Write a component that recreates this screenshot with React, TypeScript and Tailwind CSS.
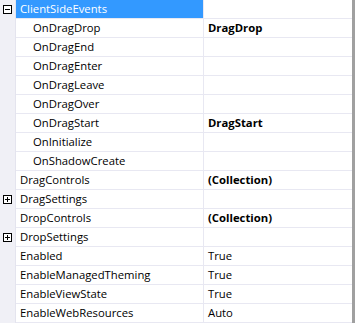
import React from 'react';

type Row = {
  name: string;
  value?: string;
  bold?: boolean;
  indent?: boolean;
  toggle?: '+' | '-';
  selected?: boolean;
};

const rows: Row[] = [
  { name: 'ClientSideEvents', toggle: '-', selected: true },
  { name: 'OnDragDrop', value: 'DragDrop', bold: true, indent: true },
  { name: 'OnDragEnd', indent: true },
  { name: 'OnDragEnter', indent: true },
  { name: 'OnDragLeave', indent: true },
  { name: 'OnDragOver', indent: true },
  { name: 'OnDragStart', value: 'DragStart', bold: true, indent: true },
  { name: 'OnInitialize', indent: true },
  { name: 'OnShadowCreate', indent: true },
  { name: 'DragControls', value: '(Collection)', bold: true },
  { name: 'DragSettings', toggle: '+' },
  { name: 'DropControls', value: '(Collection)', bold: true },
  { name: 'DropSettings', toggle: '+' },
  { name: 'Enabled', value: 'True' },
  { name: 'EnableManagedTheming', value: 'True' },
  { name: 'EnableViewState', value: 'True' },
  { name: 'EnableWebResources', value: 'Auto' },
];

function Toggle({ kind }: { kind: '+' | '-' }) {
  return (
    <svg width="9" height="9" viewBox="0 0 9 9" className="block">
      <rect x="0.5" y="0.5" width="8" height="8" fill="white" stroke="black" />
      <line x1="2" y1="4.5" x2="7" y2="4.5" stroke="black" />
      {kind === '+' && <line x1="4.5" y1="2" x2="4.5" y2="7" stroke="black" />}
    </svg>
  );
}

export default function App() {
  return (
    <div
      className="flex w-[355px] h-[323px] bg-white overflow-hidden text-[11.3px] text-black"
      style={{ fontFamily: '"Open Sans", "DejaVu Sans", sans-serif' }}
    >
      <div className="flex-1 flex flex-col">
        {rows.map((r) => (
          <div key={r.name} className="flex h-[19px] shrink-0">
            <div className="w-[16px] shrink-0 bg-[#f0f0f6] border-r border-[#e4e4ee] flex items-center justify-center">
              {r.toggle && <Toggle kind={r.toggle} />}
            </div>
            <div
              className={`w-[188px] shrink-0 flex items-center border-b border-r border-[#e8e8f2] ${
                r.selected ? 'bg-[#3399ff] text-white' : ''
              } ${r.indent ? 'pl-[17px]' : 'pl-[4px]'}`}
            >
              <span className="leading-none whitespace-nowrap">{r.name}</span>
            </div>
            <div className="flex-1 flex items-center pl-[4px] border-b border-[#e8e8f2]">
              {r.value && (
                <span className={`leading-none whitespace-nowrap ${r.bold ? 'font-bold' : ''}`}>
                  {r.value}
                </span>
              )}
            </div>
          </div>
        ))}
      </div>
      <div className="w-[3px] bg-[#a0a0a0]" />
    </div>
  );
}
